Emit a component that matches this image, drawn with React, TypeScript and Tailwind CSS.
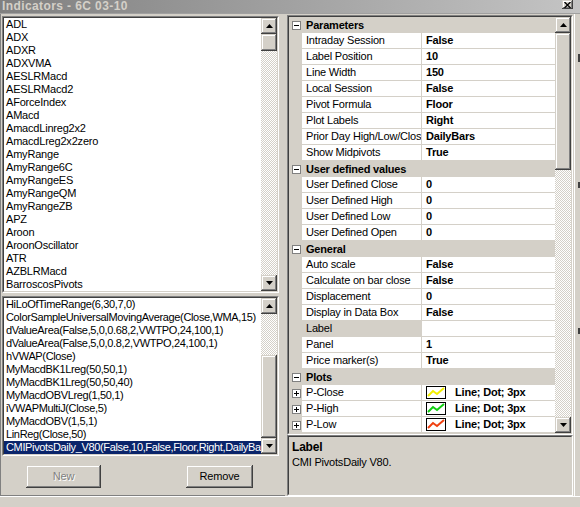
import React from 'react';

const INDICATORS = [
  'ADL', 'ADX', 'ADXR', 'ADXVMA', 'AESLRMacd', 'AESLRMacd2', 'AForceIndex', 'AMacd',
  'AmacdLinreg2x2', 'AmacdLreg2x2zero', 'AmyRange', 'AmyRange6C', 'AmyRangeES', 'AmyRangeQM',
  'AmyRangeZB', 'APZ', 'Aroon', 'AroonOscillator', 'ATR', 'AZBLRMacd', 'BarroscosPivots',
];

const APPLIED = [
  'HiLoOfTimeRange(6,30,7,0)',
  'ColorSampleUniversalMovingAverage(Close,WMA,15)',
  'dValueArea(False,5,0,0.68,2,VWTPO,24,100,1)',
  'dValueArea(False,5,0,0.8,2,VWTPO,24,100,1)',
  'hVWAP(Close)',
  'MyMacdBK1Lreg(50,50,1)',
  'MyMacdBK1Lreg(50,50,40)',
  'MyMacdOBVLreg(1,50,1)',
  'iVWAPMultiJ(Close,5)',
  'MyMacdOBV(1,5,1)',
  'LinReg(Close,50)',
  'CMIPivotsDaily_V80(False,10,False,Floor,Right,DailyBars,True,0,0,0,0)',
];

type Row =
  | { kind: 'cat'; label: string }
  | { kind: 'prop'; label: string; value: string; selected?: boolean }
  | { kind: 'plot'; label: string; color: string };

const ROWS: Row[] = [
  { kind: 'cat', label: 'Parameters' },
  { kind: 'prop', label: 'Intraday Session', value: 'False' },
  { kind: 'prop', label: 'Label Position', value: '10' },
  { kind: 'prop', label: 'Line Width', value: '150' },
  { kind: 'prop', label: 'Local Session', value: 'False' },
  { kind: 'prop', label: 'Pivot Formula', value: 'Floor' },
  { kind: 'prop', label: 'Plot Labels', value: 'Right' },
  { kind: 'prop', label: 'Prior Day High/Low/Close', value: 'DailyBars' },
  { kind: 'prop', label: 'Show Midpivots', value: 'True' },
  { kind: 'cat', label: 'User defined values' },
  { kind: 'prop', label: 'User Defined Close', value: '0' },
  { kind: 'prop', label: 'User Defined High', value: '0' },
  { kind: 'prop', label: 'User Defined Low', value: '0' },
  { kind: 'prop', label: 'User Defined Open', value: '0' },
  { kind: 'cat', label: 'General' },
  { kind: 'prop', label: 'Auto scale', value: 'False' },
  { kind: 'prop', label: 'Calculate on bar close', value: 'False' },
  { kind: 'prop', label: 'Displacement', value: '0' },
  { kind: 'prop', label: 'Display in Data Box', value: 'False' },
  { kind: 'prop', label: 'Label', value: '', selected: true },
  { kind: 'prop', label: 'Panel', value: '1' },
  { kind: 'prop', label: 'Price marker(s)', value: 'True' },
  { kind: 'cat', label: 'Plots' },
  { kind: 'plot', label: 'P-Close', color: '#f4f000' },
  { kind: 'plot', label: 'P-High', color: '#10d010' },
  { kind: 'plot', label: 'P-Low', color: '#f04010' },
];

const raised =
  'bg-[#d4d0c8] shadow-[inset_-1px_-1px_0_#404040,inset_1px_1px_0_#d4d0c8,inset_-2px_-2px_0_#808080,inset_2px_2px_0_#ffffff]';
const hatch = 'bg-[repeating-conic-gradient(#d4d0c8_0%_25%,#ffffff_0%_50%)] bg-[length:2px_2px]';

function Arrow({ up }: { up?: boolean }) {
  return (
    <svg width="7" height="4" viewBox="0 0 7 4">
      <polygon points={up ? '3.5,0 7,4 0,4' : '0,0 7,0 3.5,4'} fill="#000" />
    </svg>
  );
}

function ScrollBtn({ up }: { up?: boolean }) {
  return (
    <div className={`w-[16px] h-[16px] shrink-0 flex items-center justify-center ${raised}`}>
      <Arrow up={up} />
    </div>
  );
}

function VScroll({ before, thumb }: { before: number; thumb: number }) {
  return (
    <div className="w-[16px] h-full flex flex-col shrink-0">
      <ScrollBtn up />
      <div className={`shrink-0 ${hatch}`} style={{ height: before }} />
      <div className={`shrink-0 ${raised}`} style={{ height: thumb }} />
      <div className={`flex-1 ${hatch}`} />
      <ScrollBtn />
    </div>
  );
}

function Sunken({ className, children }: { className?: string; children: React.ReactNode }) {
  return (
    <div className={`border border-t-[#808080] border-l-[#808080] border-r-white border-b-white ${className ?? ''}`}>
      <div className="h-full border border-t-[#404040] border-l-[#404040] border-r-[#d4d0c8] border-b-[#d4d0c8] bg-white flex overflow-hidden">
        {children}
      </div>
    </div>
  );
}

function ExpandBox({ plus }: { plus?: boolean }) {
  return (
    <div className="w-[9px] h-[9px] border border-[#808080] bg-white relative">
      <div className="absolute left-[1px] top-[3px] w-[5px] h-[1px] bg-black" />
      {plus && <div className="absolute left-[3px] top-[1px] w-[1px] h-[5px] bg-black" />}
    </div>
  );
}

function Swatch({ color }: { color: string }) {
  return (
    <div className="w-[20px] h-[13px] border border-black bg-white shrink-0">
      <svg width="18" height="11" viewBox="0 0 18 11">
        <polyline points="1,9 6,4 10,7 17,1" fill="none" stroke={color} strokeWidth="2" />
      </svg>
    </div>
  );
}

function GridRow({ row }: { row: Row }) {
  if (row.kind === 'cat') {
    return (
      <div className="h-[16px] flex items-center bg-[#d4d0c8]">
        <div className="w-[13px] flex justify-center pl-[1px]">
          <ExpandBox />
        </div>
        <span className="pl-[4px] font-bold leading-none">{row.label}</span>
      </div>
    );
  }
  return (
    <div className="h-[16px] flex">
      <div className="w-[13px] bg-[#d4d0c8] flex items-center justify-center pl-[1px]">
        {row.kind === 'plot' && <ExpandBox plus />}
      </div>
      <div
        className={`w-[120px] border-r border-b border-[#d4d0c8] pl-[4px] flex items-center whitespace-nowrap overflow-hidden ${
          row.kind === 'prop' && row.selected ? 'bg-[#d4d0c8]' : 'bg-white'
        }`}
      >
        {row.label}
      </div>
      <div className="flex-1 border-b border-[#d4d0c8] bg-white flex items-center pl-[4px] font-bold whitespace-nowrap overflow-hidden">
        {row.kind === 'prop' ? (
          row.value
        ) : (
          <div className="flex items-center gap-[9px]">
            <Swatch color={row.color} />
            <span>Line; Dot; 3px</span>
          </div>
        )}
      </div>
    </div>
  );
}

export default function App() {
  return (
    <div className="w-[580px] h-[507px] bg-[#d4d0c8] flex flex-col overflow-hidden text-[11px] tracking-[-0.2px] text-black font-['Liberation_Sans','Arial',sans-serif]">
      {/* Title bar */}
      <div className="h-[14px] shrink-0 flex items-start bg-linear-to-r from-[#808080] to-[#c4c4c4] border-b border-[#a0a0a0]">
        <span className="pl-[2px] font-bold text-[#d4d0c8] text-[12px] leading-[13px] tracking-[0.4px]">Indicators - 6C 03-10</span>
        <div className={`ml-auto mr-[7px] w-[11px] h-[9px] flex items-end justify-center ${raised}`}>
          <svg width="7" height="6" viewBox="0 0 7 6" className="mb-[1px]">
            <path d="M0.5 0 L6.5 6 M6.5 0 L0.5 6" stroke="#000" strokeWidth="1.3" />
          </svg>
        </div>
      </div>

      <div className="flex h-[482px] shrink-0">
        {/* Left panel */}
        <div className="w-[285px] shrink-0 flex flex-col border-l border-[#808080] pl-[1px] pt-[2px] border-b border-b-[#808080]">
          <Sunken className="w-[277px] h-[277px]">
            <div className="flex-1 pl-[2px] overflow-hidden">
              {INDICATORS.map(name => (
                <div key={name} className="h-[13px] leading-[13px] whitespace-nowrap">{name}</div>
              ))}
            </div>
            <VScroll before={0} thumb={17} />
          </Sunken>

          <Sunken className="w-[277px] h-[160px] mt-[3px]">
            <div className="flex-1 overflow-hidden tracking-[-0.35px]">
              {APPLIED.map((name, i) => (
                <div
                  key={name}
                  className={`h-[13px] leading-[13px] whitespace-nowrap pl-[2px] ${
                    i === APPLIED.length - 1 ? 'bg-[#0a246a] text-white' : ''
                  }`}
                >
                  {name}
                </div>
              ))}
            </div>
            <VScroll before={41} thumb={83} />
          </Sunken>

          <div className="flex mt-[9px]">
            <button className={`ml-[24px] w-[75px] h-[23px] text-[#808080] [text-shadow:1px_1px_0_#ffffff] ${raised}`}>New</button>
            <button className={`ml-[85px] w-[67px] h-[23px] ${raised}`}>Remove</button>
          </div>
        </div>

        {/* Splitter */}
        <div className="w-[2px] shrink-0" />

        {/* Right panel */}
        <div className="w-[286px] shrink-0 flex flex-col pt-[1px]">
          <Sunken className="h-[420px]">
            <div className="flex-1 flex flex-col">
              {ROWS.map((row, i) => (
                <GridRow key={i} row={row} />
              ))}
            </div>
            <VScroll before={0} thumb={137} />
          </Sunken>
          <div className="h-[61px] border border-t-[#808080] border-l-[#808080] border-r-white border-b-white">
            <div className="h-full border border-t-[#404040] border-l-[#404040] border-r-[#d4d0c8] border-b-[#d4d0c8] px-[3px] pt-[3px]">
              <div className="font-bold leading-[15px] text-[12px]">Label</div>
              <div className="leading-[14px]">CMI PivotsDaily V80.</div>
            </div>
          </div>
        </div>

        {/* Edge of window behind */}
        <div className="flex-1 border-l border-white ml-[1px] flex flex-col">
          <div className="h-[40px]" />
          <div className="h-[8px] w-[2px] ml-[3px] bg-[#404040]" />
          <div className="h-[120px]" />
          <div className="h-[6px] w-[2px] ml-[3px] bg-[#404040]" />
          <div className="h-[140px]" />
          <div className="h-[6px] w-[2px] ml-[3px] bg-[#404040]" />
        </div>
      </div>

      <div className="flex-1 border-t border-white" />
    </div>
  );
}
